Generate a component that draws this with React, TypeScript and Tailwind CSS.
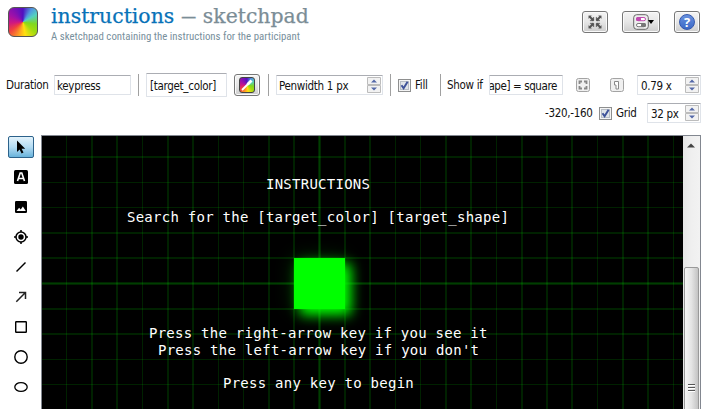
import React from "react";

const verticals = [
  [66, 1], [91, 2], [116, 2], [142, 1], [167, 2], [192, 2], [218, 1], [243, 1], [268, 2], [293, 2],
  [344, 2], [369, 2], [395, 1], [420, 1], [445, 2], [470, 2], [496, 1], [521, 2], [546, 2], [571, 2],
  [597, 1], [622, 2], [647, 2], [673, 1],
];
const horizontals = [
  [156, 2], [182, 1], [207, 1], [232, 2], [257, 2], [308, 2], [333, 2], [359, 1], [384, 1],
];

const rainbow =
  "bg-[conic-gradient(from_0deg,#5010c0,#5098e0_35deg,#55d0c0_60deg,#80d820_100deg,#a0dc10_130deg,#ffe010_170deg,#ffa820_195deg,#f04040_235deg,#d01880_265deg,#a010a8_300deg,#7010b8_335deg,#5010c0)]";
const gray = "rounded-[3px] border border-[#777] bg-linear-to-b from-[#f4f4f4] via-[#e6e6e6] to-[#cdcdcd] shadow-[inset_0_0_0_1px_#fafafa]";
const field = "border border-[#dfe3e9] border-t-[#abadb3] rounded-[1px] bg-white flex items-center overflow-hidden shrink-0";

function Fit({ className = "", children }: { className?: string; children: React.ReactNode }) {
  return <span className={"inline-block origin-left whitespace-pre " + className}>{children}</span>;
}

function Separator({ className = "" }: { className?: string }) {
  return <div className={"h-[22px] w-px shrink-0 bg-[#a0a0a0] " + className} />;
}

function Check() {
  return (
    <svg width="13" height="13" viewBox="0 0 13 13" className="shrink-0">
      <rect x=".5" y=".5" width="12" height="12" fill="#f4f4f4" stroke="#8e8f8f" />
      <rect x="2.5" y="2.5" width="8" height="8" fill="#dfe4e9" stroke="#b7bdc5" />
      <path d="M3.5 6.2 5.6 9.2 9.6 2.8" fill="none" stroke="#3e5299" strokeWidth="2" />
    </svg>
  );
}

function Arrows() {
  return (
    <svg width="14" height="16" viewBox="0 0 14 16" className="mr-px shrink-0">
      <path d="M.5.5h13v7H.5zM.5 8.500h13v7H.5z" fill="#f2f2f2" stroke="#bcbcbc" />
      <path d="M4 5.500h6L7 2.500zM4 10.500h6L7 13.500z" fill="#5468a8" />
    </svg>
  );
}

function Expand() {
  return (
    <svg width="14" height="14" viewBox="0 0 14 14" fill="#555" stroke="#555" strokeWidth="1.900">
      <path d="M1.500 1.500 5.500 5.500M12.500 1.500 8.500 5.500M1.500 12.500 5.500 8.500M12.500 12.500 8.500 8.500" />
      <path d="M5.800 2v3.800H2zM8.200 2v3.800h3.800zM5.800 12V8.200H2zM8.200 12V8.200h3.800z" strokeWidth=".4" />
      <path d="M.7.7h2.800L.7 3.500zM13.300.7v2.800L10.500.7zM.7 13.300v-2.800l2.800 2.800zM13.300 13.300h-2.800l2.800-2.800z" strokeWidth=".3" />
    </svg>
  );
}

const tools = [
  <path key="0" d="M6 3.500v11.500l2.600-2.500 2 4 1.900-1-1.900-3.700h3.600z" fill="#000" />,
  <g key="1">
    <rect x="3" y="3" width="14" height="14" rx="1.500" fill="#000" />
    <path d="M6.500 14 9.200 6h1.600l2.700 8M7.500 11.500h5" fill="none" stroke="#fff" strokeWidth="1.600" />
  </g>,
  <g key="2">
    <rect x="4" y="4" width="12" height="12" rx="1.200" fill="#000" />
    <path d="m5.500 14 2.600-3.300 1.600 1.900 2.200-3 2.900 4.400z" fill="#fff" />
  </g>,
  <g key="3" fill="none" stroke="#000" strokeWidth="1.500">
    <circle cx="10" cy="10" r="5" /><circle cx="10" cy="10" r="2.700" fill="#000" stroke="none" />
    <path d="M10 3v2M10 15v2M3 10h2M15 10h2" />
  </g>,
  <path key="4" d="M5.500 14.500 14.500 5.500" stroke="#000" strokeWidth="1.500" />,
  <path key="5" d="M5.300 14.700 14.200 5.800M8 5.500h6.500V12" fill="none" stroke="#222" strokeWidth="1.500" />,
  <rect key="6" x="4.700" y="4.700" width="10.600" height="10.600" rx=".5" fill="none" stroke="#000" strokeWidth="1.400" />,
  <circle key="7" cx="10" cy="10" r="6.200" fill="none" stroke="#000" strokeWidth="1.400" />,
  <ellipse key="8" cx="10" cy="10" rx="6.200" ry="4.400" fill="none" stroke="#000" strokeWidth="1.300" />,
];

const lines = [
  { text: "INSTRUCTIONS", place: "left-[224px] top-[40px]" },
  { text: "Search for the [target_color] [target_shape]", place: "left-[85px] top-[73px]" },
  { text: "Press the right-arrow key if you see it", place: "left-[107px] top-[189px]" },
  { text: "Press the left-arrow key if you don't", place: "left-[116px] top-[206px]" },
  { text: "Press any key to begin", place: "left-[181px] top-[239px]" },
];

function Canvas() {
  return (
    <div className="relative w-[641px] shrink-0 overflow-hidden bg-black">
      <svg className="block" width="641" height="273" viewBox="42 136 641 273" shapeRendering="crispEdges">
        {verticals.map(([x, w]) => <rect key={x} x={x} y="136" width={w} height="273" fill="#00ff00" fillOpacity=".13" />)}
        {horizontals.map(([y, h]) => <rect key={y} x="42" y={y} width="641" height={h} fill="#00ff00" fillOpacity=".13" />)}
        <path d="M318 136h3v273h-3zM42 282h641v3H42z" fill="#00ff00" fillOpacity=".14" />
        <path d="M319 136h1v273h-1zM42 283h641v1H42z" fill="#00ff00" fillOpacity=".12" />
      </svg>
      <div className="absolute left-[252px] top-[122px] h-[51px] w-[51px] bg-[#00ff00] shadow-[6px_6px_12px_0_#00ff00,0_0_20px_0_rgba(0,255,0,0.2)]" />
      {lines.map((l) => (
        <div key={l.text} className={"absolute whitespace-pre font-['DejaVu_Sans_Mono',monospace] text-[14px] leading-[17px] tracking-[0.255px] text-white " + l.place}>
          {l.text}
        </div>
      ))}
    </div>
  );
}

export default function App() {
  return (
    <div className="h-[409px] w-[713px] overflow-hidden bg-white font-['DejaVu_Sans_Condensed','DejaVu_Sans',sans-serif] text-[11.5px] leading-[14px] tracking-[-0.3px] text-[#111] [font-stretch:condensed]">
      <header className="flex h-[73px] items-start pl-2">
        <div className={"mt-[7px] size-[30px] shrink-0 rounded-[6px] border border-[#555] " + rainbow} />
        <div className="ml-[13px] w-[531px] shrink-0 pt-[3px] tracking-normal">
          <h1 className="h-[27px] font-['Roboto_Slab','DejaVu_Serif',serif] text-[20px] leading-[27px] text-[#7b8d96] [font-stretch:normal] [-webkit-text-stroke:0.25px]">
            <Fit className="scale-x-[1.02]"><span className="text-[#0772b8]">instructions</span><span className="ml-[9px] mr-[9px] inline-block scale-x-[1.6]">–</span>sketchpad</Fit>
          </h1>
          <p className="h-[13px] font-[Roboto,sans-serif] text-[11px] leading-[13px] text-[#78909c]">
            <Fit className="scale-x-[0.985]">A sketchpad containing the instructions for the participant</Fit>
          </p>
        </div>
        <div className="mt-[11px] flex gap-[14px]">
          <button className={"flex h-[22px] w-[26px] items-center justify-center " + gray}><Expand /></button>
          <button className={"flex h-[22px] w-[38px] items-center justify-center " + gray}>
            <svg width="22" height="16" viewBox="0 0 22 16" className="ml-[5px] shrink-0">
              <rect x=".7" y=".7" width="14.600" height="14.600" rx="3" fill="#eee" stroke="#666" />
              <rect x="3.500" y="3.500" width="9" height="3.200" rx="1.600" fill="#fff" stroke="#c04ab0" />
              <rect x="3" y="3" width="5" height="4" rx="1.500" fill="#c04ab0" />
              <rect x="3.500" y="9.500" width="9" height="3.200" rx="1.600" fill="#fff" stroke="#777" />
              <rect x="8" y="9" width="5" height="4" rx="1.500" fill="#777" />
              <path d="M15 6h6l-3 4z" fill="#000" />
            </svg>
          </button>
          <button className={"flex h-[22px] w-[26px] items-center justify-center " + gray}>
            <span className="flex size-4 items-center justify-center rounded-full border border-[#3458ad] bg-linear-to-b from-[#6791df] to-[#3c68c6] font-['Open_Sans',sans-serif] text-[13px] font-bold leading-none text-white [font-stretch:normal]">?</span>
          </button>
        </div>
      </header>

      <div className="flex h-6 items-center pl-[6px]">
        <span className="w-12 shrink-0"><Fit>Duration</Fit></span>
        <div className={"h-5 w-[77px] pl-[2px] pt-px " + field}><Fit>keypress</Fit></div>
        <Separator className="ml-[7px] mr-[7px]" />
        <div className={"h-6 w-[81px] pl-[3px] pt-px " + field}><Fit>[target_color]</Fit></div>
        <button className={"ml-[7px] flex h-[22px] w-[26px] shrink-0 items-center justify-center " + gray}>
          <span className={"flex size-4 items-center justify-center rounded-[3px] border border-[#444] " + rainbow}>
            <svg width="14" height="14" viewBox="0 0 14 14" className="shrink-0" stroke="#fff"><path d="m2 12 7-7" strokeWidth="1.800" /><path d="m7.500 6.500 4-4" strokeWidth="2.800" /></svg>
          </span>
        </button>
        <Separator className="ml-2 mr-[7px]" />
        <div className={"h-5 w-[107px] justify-between pl-[2px] " + field}><Fit className="pt-px">Penwidth 1 px</Fit><Arrows /></div>
        <Separator className="ml-[7px] mr-[7px]" />
        <Check />
        <span className="ml-1 w-[25px] shrink-0"><Fit>Fill</Fit></span>
        <Separator className="mr-[6px]" />
        <span className="w-[42px] shrink-0"><Fit>Show if</Fit></span>
        <div className={"h-5 w-[74px] justify-end pr-[5px] pt-px " + field}><Fit className="tracking-[-0.4px]">ape] = square</Fit></div>
        <svg className="ml-[13px] shrink-0" width="14" height="14" viewBox="0 0 14 14">
          <rect x=".5" y=".5" width="13" height="13" rx="2" fill="#f0f0f0" stroke="#a3a3a3" />
          <path d="M3.500 6V3.500H6M8 3.500h2.500V6M10.500 8v2.500H8M6 10.500H3.500V8" fill="none" stroke="#888" strokeWidth="1.800" />
        </svg>
        <svg className="ml-5 shrink-0" width="14" height="14" viewBox="0 0 14 14">
          <rect x=".5" y=".5" width="13" height="13" rx="2" fill="#f0f0f0" stroke="#a3a3a3" />
          <path d="M4.500 3.500h4v7.500h-2.500v-4h-1.500z" fill="#fff" stroke="#8a8a8a" />
        </svg>
        <div className={"ml-[13px] h-5 w-16 justify-between pl-[3px] " + field}><Fit className="pt-px">0.79 x</Fit><Arrows /></div>
      </div>

      <div className="mt-[6px] flex h-5 items-center pl-[545px]">
        <span className="w-[54px] shrink-0"><Fit>-320,-160</Fit></span>
        <Check />
        <span className="ml-1 w-[31px] shrink-0"><Fit>Grid</Fit></span>
        <div className={"h-5 w-[54px] justify-between pl-[3px] " + field}><Fit className="pt-px">32 px</Fit><Arrows /></div>
      </div>

      <main className="mt-3 flex h-[274px]">
        <nav className="flex w-[41px] shrink-0 flex-col items-center gap-2 pt-px">
          {tools.map((shape, i) => (
            <button key={i} className={"flex h-[22px] w-[26px] shrink-0 items-center justify-center " + (i === 0 ? "rounded-[2px] border border-[#2c628b] bg-linear-to-b from-[#e4f3fb] via-[#b4dcf3] to-[#68b3db]" : "")}>
              <svg width="20" height="20" viewBox="0 0 20 20" className="shrink-0">{shape}</svg>
            </button>
          ))}
        </nav>
        <section className="flex w-[660px] border border-b-0 border-[#828790]">
          <Canvas />
          <div className="flex w-[17px] shrink-0 flex-col items-center bg-linear-to-r from-[#e6e6e6] via-[#efefef] to-[#f2f2f2]">
            <svg width="9" height="5" viewBox="0 0 9 5" className="mt-[7px] shrink-0"><path d="M0 4.500 4 .5l4 4z" fill="#444" /></svg>
            <div className="mt-[119px] flex h-[150px] w-[15px] shrink-0 flex-col items-center gap-px rounded-t-[2px] border border-[#999] bg-linear-to-r from-[#f6f6f6] via-[#e4e4e4] to-[#c3c3c3] pt-[116px]">
              <i className="h-[2px] w-[7px] border-b border-white bg-[#555]" />
              <i className="h-[2px] w-[7px] border-b border-white bg-[#555]" />
              <i className="h-[2px] w-[7px] border-b border-white bg-[#555]" />
            </div>
          </div>
        </section>
      </main>
    </div>
  );
}
